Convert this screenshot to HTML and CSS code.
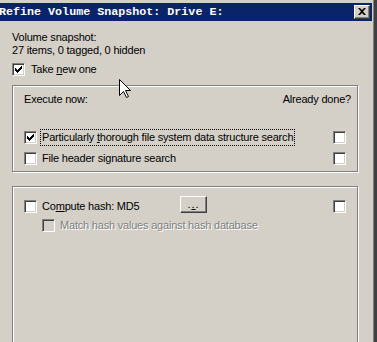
FILE: index.html
```html
<!DOCTYPE html>
<html>
<head>
<meta charset="utf-8">
<link rel="stylesheet" href="styles.css">
</head>
<body>
<div class="window">
  <div class="titlebar">
    <span class="title">Refine Volume Snapshot: Drive E:</span>
    <span class="close">
      <svg width="8" height="7" viewBox="0 0 8 7"><path d="M0 0h2l2 2 2-2h2L5 3.5 8 7H6L4 5 2 7H0l3-3.5z" fill="#000"/></svg>
    </span>
  </div>
  <div class="content">
    <div class="info">Volume snapshot:<br>27 items, 0 tagged, 0 hidden</div>
    <div class="check take"><span class="box checked"></span><span class="label">Take <u>n</u>ew one</span></div>

    <div class="group g1">
      <div class="head"><span>Execute now:</span><span>Already done?</span></div>
      <div class="row r1">
        <div class="check"><span class="box checked"></span><span class="label focus">Particularly <u>t</u>horough file system data structure search</span></div>
        <span class="box"></span>
      </div>
      <div class="row r2">
        <div class="check"><span class="box"></span><span class="label">File header signature search</span></div>
        <span class="box"></span>
      </div>
    </div>

    <div class="group g2">
      <div class="row r3">
        <div class="check hashcheck"><span class="box"></span><span class="label">Co<u>m</u>pute hash: MD5</span></div>
        <span class="btn">.<u>.</u>.</span>
        <span class="spacer"></span>
        <span class="box"></span>
      </div>
      <div class="check sub disabled"><span class="box"></span><span class="label">Match hash values against hash database</span></div>
    </div>
  </div>
</div>
<svg class="cursor" width="13" height="20" viewBox="0 0 13 20"><path d="M0.5 0.5V16.5L4.5 12.5L7.5 18.5L9.5 17.5L6.5 11.5H11.5Z" fill="#fff" stroke="#000" stroke-width="1"/></svg>
</body>
</html>
```
FILE: styles.css
```css
* { box-sizing: border-box; }
html, body { margin: 0; padding: 0; }
body {
  width: 377px;
  height: 342px;
  overflow: hidden;
  background: #404040;
  font-family: Tahoma, "Liberation Sans", Arial, sans-serif;
  font-size: 11px;
  letter-spacing: -0.2px;
  color: #000;
}
.window {
  width: 374px;
  height: 342px;
  overflow: hidden;
  background: #d4d0c8;
  border-right: 1px solid #808080;
  padding: 3px 1px 0 0;
}
.titlebar {
  height: 18px;
  background: #0a246a;
  display: flex;
  align-items: center;
  justify-content: space-between;
  padding-right: 2px;
}
.title {
  font-family: "Liberation Mono", monospace;
  font-weight: bold;
  font-size: 11.7px;
  color: #fff;
  margin-left: -1px;
  letter-spacing: 0;
  white-space: nowrap;
}
.close {
  width: 16px;
  height: 14px;
  background: #d4d0c8;
  border-top: 1px solid #fff;
  border-left: 1px solid #fff;
  border-right: 1px solid #404040;
  border-bottom: 1px solid #404040;
  box-shadow: inset -1px -1px #808080;
  display: flex;
  align-items: center;
  justify-content: center;
  padding-bottom: 1px;
}
.content {
  padding: 10px 0 0 12px;
}
.info {
  line-height: 13px;
  white-space: nowrap;
}
.check {
  display: flex;
  align-items: center;
  white-space: nowrap;
}
.take {
  margin-top: 5px;
  height: 15px;
}
.box {
  display: inline-block;
  width: 13px;
  height: 13px;
  flex: none;
  background: #fff;
  border-top: 1px solid #808080;
  border-left: 1px solid #808080;
  border-right: 1px solid #fff;
  border-bottom: 1px solid #fff;
  box-shadow: inset 1px 1px #404040, inset -1px -1px #d4d0c8;
  position: relative;
}
.box.checked::after {
  content: "";
  position: absolute;
  left: 2px;
  top: 2px;
  width: 7px;
  height: 7px;
  background:
    linear-gradient(#000,#000) 0 2px / 1px 3px no-repeat,
    linear-gradient(#000,#000) 1px 3px / 1px 3px no-repeat,
    linear-gradient(#000,#000) 2px 4px / 1px 3px no-repeat,
    linear-gradient(#000,#000) 3px 3px / 1px 3px no-repeat,
    linear-gradient(#000,#000) 4px 2px / 1px 3px no-repeat,
    linear-gradient(#000,#000) 5px 1px / 1px 3px no-repeat,
    linear-gradient(#000,#000) 6px 0 / 1px 3px no-repeat;
}
.label {
  margin-left: 5px;
  line-height: 13px;
}
.take .label { margin-left: 6px; }
.focus {
  outline: 1px dotted #000;
  outline-offset: 0;
  padding: 1px;
  margin-left: 4px;
}
.group {
  width: 346px;
  border: 1px solid #808080;
  box-shadow: inset 1px 1px #fff, 1px 1px #fff;
  padding: 0 11px;
}
.g1 {
  margin-top: 8px;
  height: 87px;
  padding-top: 7px;
}
.head {
  display: flex;
  justify-content: space-between;
  line-height: 13px;
  margin-right: -5px;
}
.row {
  display: flex;
  align-items: center;
  justify-content: space-between;
  height: 13px;
}
.r1 { margin-top: 25px; }
.r2 { margin-top: 8px; }
.g2 {
  margin-top: 14px;
  height: 160px;
  border-bottom: none;
  padding-top: 13px;
}
.r3 { justify-content: flex-start; }
.hashcheck { width: 156px; flex: none; }
.spacer { flex: 1; }
.btn {
  width: 27px;
  height: 17px;
  flex: none;
  align-self: flex-start;
  margin-top: -4px;
  background: #d4d0c8;
  border-top: 1px solid #fff;
  border-left: 1px solid #fff;
  border-right: 1px solid #404040;
  border-bottom: 1px solid #404040;
  box-shadow: inset -1px -1px #808080;
  display: flex;
  align-items: center;
  justify-content: center;
  letter-spacing: 1px;
  line-height: 13px;
}
.sub {
  margin-top: 6px;
  margin-left: 18px;
}
.disabled .box { background: #d4d0c8; }
.disabled .label {
  color: #808080;
  text-shadow: 1px 1px #fff;
}
.cursor {
  position: absolute;
  left: 119px;
  top: 79px;
}
```
